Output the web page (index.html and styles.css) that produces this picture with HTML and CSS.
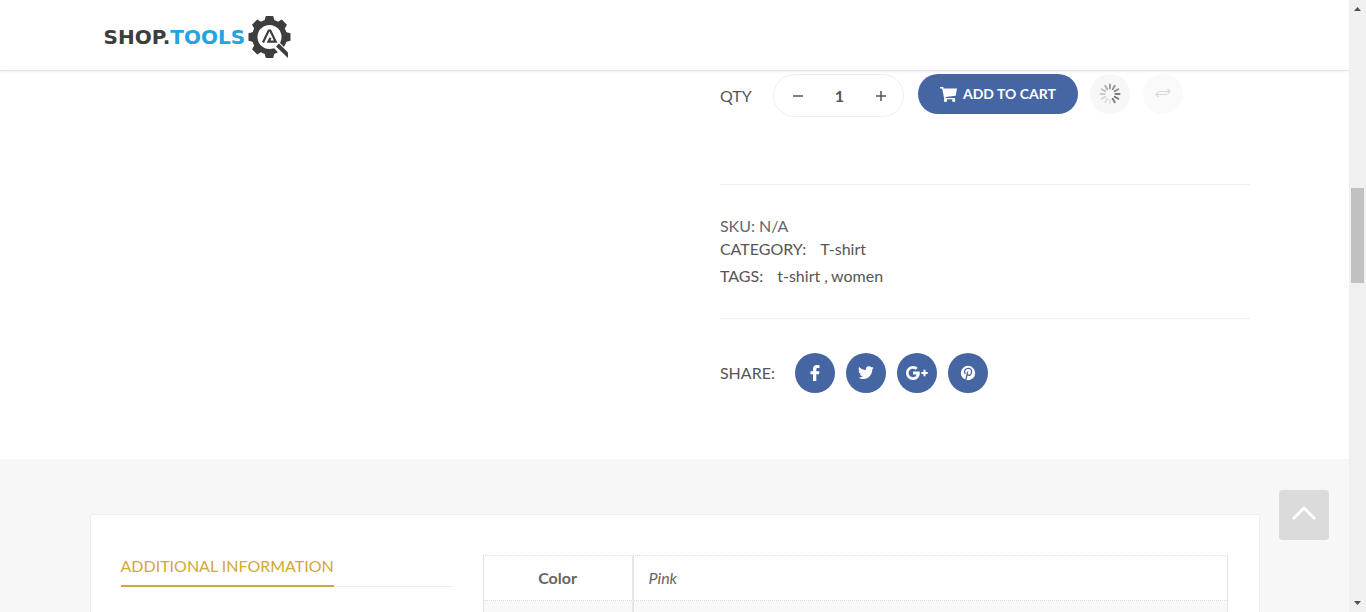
FILE: index.html
```html
<!DOCTYPE html>
<html lang="en">
<head>
<meta charset="utf-8">
<title>Shop.Tools</title>
<link rel="stylesheet" href="styles.css">
</head>
<body>
<div class="window">
  <div class="page">
    <header class="header">
      <div class="container">
        <a class="logo" href="#">
          <span class="logo-text">SHOP.<span class="logo-accent">TOOLS</span></span>
          <svg class="logo-gear" viewBox="0 0 44 44" aria-hidden="true">
            <g fill="#3d3d3c">
              <circle cx="21.500" cy="22" r="17.500"/>
              <path d="M16.500 6 17.800 1h7.400L26.500 6z"/>
              <path d="M16.500 6 17.800 1h7.400L26.500 6z" transform="rotate(45 21.500 22)"/>
              <path d="M16.500 6 17.800 1h7.400L26.500 6z" transform="rotate(90 21.500 22)"/>
              <path d="M16.500 6 17.800 1h7.400L26.500 6z" transform="rotate(180 21.500 22)"/>
              <path d="M16.500 6 17.800 1h7.400L26.500 6z" transform="rotate(225 21.500 22)"/>
              <path d="M16.500 6 17.800 1h7.400L26.500 6z" transform="rotate(270 21.500 22)"/>
              <path d="M16.500 6 17.800 1h7.400L26.500 6z" transform="rotate(315 21.500 22)"/>
            </g>
            <path d="M30 26 44 40v4h-8L26 33z" fill="#fff"/>
            <circle cx="21.500" cy="22" r="12" fill="#fff"/>
            <path d="m31 28.500 9 9V43L28 31.500z" fill="#3d3d3c"/>
            <path d="m15 27.500 5.700-12h1.600l5.400 11.200h-7.200l2-4" fill="none" stroke="#3d3d3c" stroke-width="2.200"/>
          </svg>
        </a>
      </div>
    </header>

    <main>
      <section class="container product">
        <div class="summary">
          <form class="buy">
            <label class="buy-label" for="qty">QTY</label>
            <div class="stepper">
              <button type="button" aria-label="Decrease"><svg viewBox="0 0 10 10"><path d="M0 5h10"/></svg></button>
              <input id="qty" type="text" value="1">
              <button type="button" aria-label="Increase"><svg viewBox="0 0 10 10"><path d="M0 5h10M5 0v10"/></svg></button>
            </div>
            <button class="add" type="button">
              <svg viewBox="0 0 17 15" aria-hidden="true"><path d="M0 0h3.300l.4 1.500H17l-1.300 7.300-10.200 1.200.3 1H15v1.300H4.300L2.200 1.500H0zM5.500 11.800a1.600 1.600 0 1 1 0 3.200 1.600 1.600 0 0 1 0-3.200zm8.300 0a1.600 1.600 0 1 1 0 3.200 1.600 1.600 0 0 1 0-3.200z"/></svg>
              <span>ADD TO CART</span>
            </button>
            <button class="round wish" type="button" aria-label="Loading">
              <svg viewBox="0 0 22 22" stroke-width="2" stroke-linecap="round">
                <path d="M11 1.500v4" stroke="#a0a0a0"/>
                <path d="M11 1.500v4" stroke="#969696" transform="rotate(30 11 11)"/>
                <path d="M11 1.500v4" stroke="#8c8c8c" transform="rotate(60 11 11)"/>
                <path d="M11 1.500v4" stroke="#7c7c7c" transform="rotate(90 11 11)"/>
                <path d="M11 1.500v4" stroke="#747474" transform="rotate(120 11 11)"/>
                <path d="M11 1.500v4" stroke="#808080" transform="rotate(150 11 11)"/>
                <path d="M11 1.500v4" stroke="#e6e6e6" transform="rotate(180 11 11)"/>
                <path d="M11 1.500v4" stroke="#dedede" transform="rotate(210 11 11)"/>
                <path d="M11 1.500v4" stroke="#d6d6d6" transform="rotate(240 11 11)"/>
                <path d="M11 1.500v4" stroke="#ccc" transform="rotate(270 11 11)"/>
                <path d="M11 1.500v4" stroke="#c0c0c0" transform="rotate(300 11 11)"/>
                <path d="M11 1.500v4" stroke="#b0b0b0" transform="rotate(330 11 11)"/>
              </svg>
            </button>
            <button class="round compare" type="button" aria-label="Compare">
              <svg viewBox="0 0 16 8" fill="none" stroke="#d8d8d8" stroke-width="1.200"><path d="M4 2.500h11M12.500 0 15 2.500 12.500 5M12 5.500H1M3.500 3 1 5.500 3.500 8"/></svg>
            </button>
          </form>

          <div class="meta">
            <p class="sku">SKU: N/A</p>
            <p class="category">CATEGORY: <a href="#">T-shirt</a></p>
            <p class="tags">TAGS: <a href="#">t-shirt</a> , <a class="next" href="#">women</a></p>
          </div>

          <div class="share">
            <span class="share-label">SHARE:</span>
            <a href="#" aria-label="Facebook"><svg viewBox="0 0 24 24"><path d="M16.500 4.200v2.700h-1.700c-1.200 0-1.500.6-1.500 1.500v1.800h3.100l-.4 3.100h-2.700V20h-3.300v-6.700H7.500v-3.100H10V7.900C10 5.400 11.600 4 13.900 4c1.200 0 2.200.1 2.600.2z"/></svg></a>
            <a href="#" aria-label="Twitter"><svg viewBox="-1 -1 26 26"><path d="M20.500 6.300a7 7 0 0 1-1.700 1.800v.5c0 4.700-3.500 10-10 10-2 0-3.900-.6-5.400-1.600a7 7 0 0 0 5.200-1.500 3.500 3.500 0 0 1-3.300-2.400c.5.100 1 .1 1.600 0a3.500 3.500 0 0 1-2.800-3.500c.5.300 1 .4 1.600.5a3.500 3.500 0 0 1-1.100-4.700 10 10 0 0 0 7.200 3.700c-.5-2.500 1.300-4.300 3.400-4.300 1 0 1.900.4 2.600 1.100.8-.2 1.500-.4 2.200-.8-.3.800-.8 1.500-1.500 1.900.7-.1 1.400-.3 2-.7z"/></svg></a>
            <a href="#" aria-label="Google Plus"><svg viewBox="0 0 24 24"><path d="M8 10.500h6.600c.9 4.800-2 8.500-6.600 8.500a7 7 0 1 1 4.700-12.200l-2 1.900A4.300 4.300 0 1 0 8 16.300c2 0 3.200-1.100 3.600-2.700H8zM18.500 8.800h2v2.100h2.200V13h-2.200v2.200h-2V13h-2.200v-2.100h2.200z"/></svg></a>
            <a href="#" aria-label="Pinterest"><svg viewBox="0 0 24 24"><circle cx="12" cy="12" r="7.200"/><path d="m9.700 19.300 2.100-8.600M9.300 13c-2-3.100.2-5.600 3-5.600 2.200 0 3.600 1.500 3.300 3.600-.3 2.300-1.900 3.700-3.400 3.200-.7-.2-1.100-.7-1.100-1.300" fill="none" stroke="#4666a3" stroke-width="1.300"/></svg></a>
          </div>
        </div>
      </section>

      <section class="details">
        <div class="container card">
          <nav class="tabs"><a href="#info">ADDITIONAL INFORMATION</a></nav>
          <table class="attributes" id="info">
            <tbody>
              <tr><th scope="row">Color</th><td>Pink</td></tr>
              <tr class="alt"><th></th><td></td></tr>
            </tbody>
          </table>
        </div>
      </section>
    </main>
    <button class="to-top" type="button" aria-label="Back to top"><svg viewBox="0 0 24 14"><path d="m2 12 10-10 10 10"/></svg></button>
  </div>
  <div class="scrollbar" aria-hidden="true">
    <svg class="arrow" viewBox="0 0 7 4"><path d="M0 4h7L3.500 0z"/></svg>
    <div class="track"><div class="thumb"></div></div>
    <svg class="arrow" viewBox="0 0 7 4"><path d="M0 0h7L3.500 4z"/></svg>
  </div>
</div>
</body>
</html>
```

FILE: styles.css
```css
* { box-sizing: border-box; }
body {
  margin: 0;
  font: 16px/24px Lato, sans-serif;
  color: #555;
  background: #fff;
}
a { color: inherit; text-decoration: none; }
button { padding: 0; border: 0; font: inherit; }
svg { display: block; }

.window {
  display: grid;
  grid-template-columns: minmax(0, 1fr) 17px;
  height: 100vh;
  overflow: hidden;
}
.page { position: relative; overflow: hidden; }
.container { max-width: 1170px; margin: 0 auto; }

.header {
  border-bottom: 1px solid #e4e4e4;
  box-shadow: 0 1px 2px rgba(0, 0, 0, .06);
}
.header .container { padding: 15px 14px 11px; }
.logo { display: flex; align-items: center; gap: 3px; width: max-content; }
.logo-text {
  font: bold 20px/44px "DejaVu Sans", sans-serif;
  color: #3d3d3c;
}
.logo-accent { color: #24a3de; }
.logo-gear { width: 44px; height: 44px; }

.product {
  display: grid;
  grid-template-columns: 25fr 21fr;
  padding: 3px 10px 66px 0;
}
.summary { grid-column: 2; }
.buy {
  display: flex;
  align-items: flex-start;
  padding-bottom: 66px;
}
.buy-label { width: 53px; line-height: 44px; }
.stepper {
  display: flex;
  align-items: center;
  justify-content: space-between;
  width: 131px;
  height: 43px;
  margin-right: 14px;
  padding: 0 16px 0 18px;
  border: 1px solid #eee;
  border-radius: 22px;
}
.stepper button { width: 12px; height: 24px; padding: 0 1px; background: none; }
.stepper svg { width: 10px; height: 10px; stroke: #555; stroke-width: 1.5; }
.stepper input {
  width: 40px;
  height: 40px;
  padding: 0;
  border: 0;
  font: bold 16px/24px Lato, sans-serif;
  color: #555;
  text-align: center;
  background: none;
}
.add {
  display: flex;
  align-items: center;
  justify-content: center;
  gap: 6px;
  width: 160px;
  height: 40px;
  margin-right: 12px;
  border-radius: 20px;
  font: bold 14px/40px Lato, sans-serif;
  color: #fff;
  background: #4666a3;
}
.add svg { width: 17px; height: 15px; fill: #fff; }
.round {
  display: grid;
  place-items: center;
  width: 40px;
  height: 40px;
  border-radius: 50%;
}
.wish { margin-right: 13px; background: #f7f7f7; }
.wish svg { width: 22px; height: 22px; }
.compare { background: #fafafa; }
.compare svg { width: 16px; height: 8px; margin-bottom: 2px; }

.meta {
  padding: 29px 0 27px;
  border: solid #eee;
  border-width: 1px 0;
}
.meta p { margin: 0; }
.sku { line-height: 23px; color: #666; }
.category { line-height: 24px; }
.tags { line-height: 30px; }
.meta a { margin-left: 10px; }
.meta .next { margin-left: -1px; }

.share {
  display: flex;
  align-items: center;
  gap: 11px;
  padding-top: 34px;
}
.share-label { width: 64px; }
.share a {
  display: grid;
  place-items: center;
  width: 40px;
  height: 40px;
  border-radius: 50%;
  background: #4666a3;
}
.share svg { width: 24px; height: 24px; fill: #fff; }

.details { padding-top: 55px; background: #f7f7f7; }
.card {
  display: grid;
  grid-template-columns: 332px 1fr;
  gap: 30px;
  align-items: start;
  padding: 40px 31px 40px 30px;
  border: 1px solid #eee;
  background: #fff;
}
.tabs { display: flex; box-shadow: inset 0 -1px #eee; }
.tabs a {
  padding-bottom: 8px;
  border-bottom: 2px solid #d3a739;
  line-height: 22px;
  color: #d3a739;
}
.attributes {
  width: 100%;
  border-collapse: separate;
  border-spacing: 0;
  border: solid #e6e6e6;
  border-width: 0 1px;
  border-top: 1px dotted #ddd;
  color: #666;
}
.attributes th,
.attributes td {
  height: 45px;
  padding: 0 15px;
  border-bottom: 1px dotted #ddd;
}
.attributes th { width: 150px; border-right: 2px solid #e6e6e6; }
.attributes td { font-style: italic; }
.attributes .alt { background: #f8f8f8; }

.to-top {
  position: absolute;
  right: 20px;
  bottom: 72px;
  display: grid;
  place-items: center;
  width: 50px;
  height: 50px;
  padding-bottom: 4px;
  border-radius: 4px;
  background: #dbdbdb;
}
.to-top svg {
  width: 24px;
  height: 14px;
  fill: none;
  stroke: #fff;
  stroke-width: 3;
  stroke-linecap: round;
}

.scrollbar {
  display: flex;
  flex-direction: column;
  align-items: center;
  justify-content: space-between;
  padding: 7px 0;
  background: #f0f0f0;
}
.arrow { width: 7px; height: 4px; fill: #505050; }
.track { flex: 1; width: 13px; padding-top: 177px; }
.thumb { height: 95px; background: #c1c1c1; }
```
